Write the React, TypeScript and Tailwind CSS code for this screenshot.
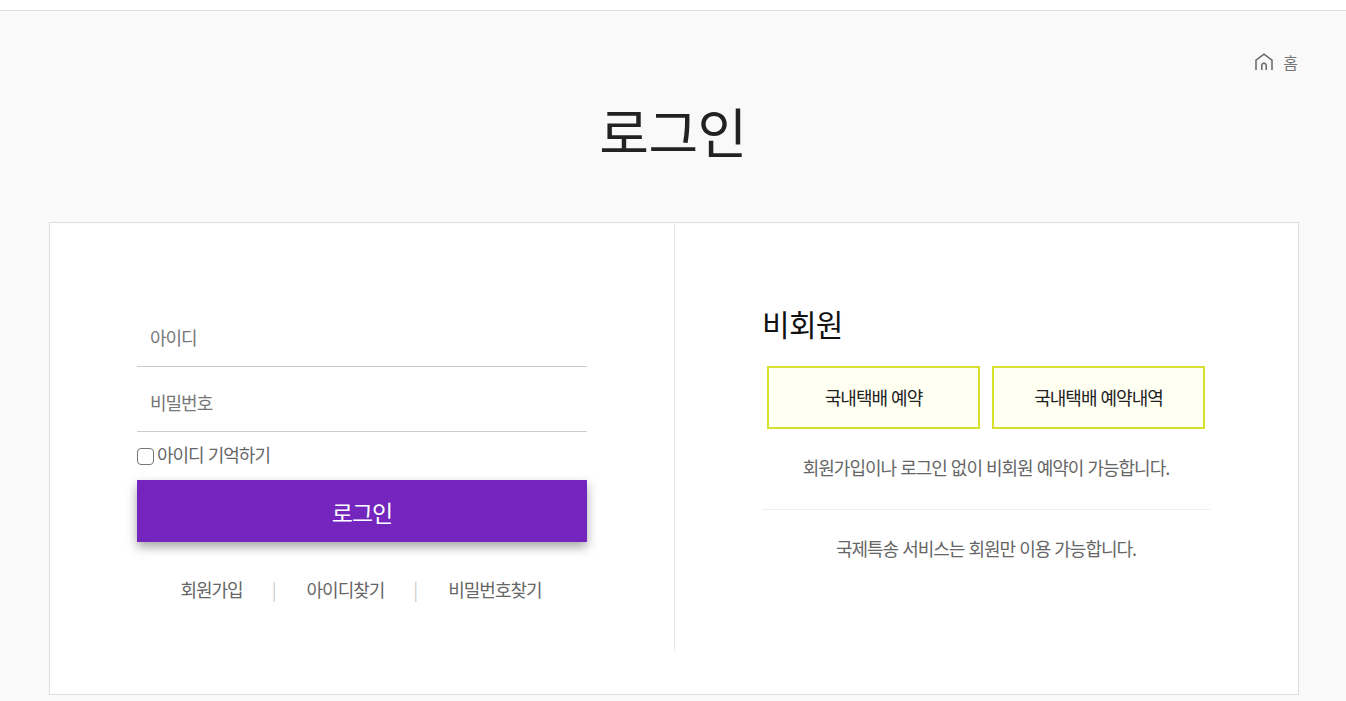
const font = { fontFamily: '"Noto Sans CJK KR", "Noto Sans", sans-serif' }

function Field({ label, className = '' }: { label: string; className?: string }) {
  return (
    <div className={`flex h-[64px] items-center border-b border-[#cccccc] pt-[5px] pl-[13px] text-[18px] tracking-[-1px] text-[#777777] ${className}`}>
      {label}
    </div>
  )
}

function GuestButton({ label }: { label: string }) {
  return (
    <a className="flex h-[63px] w-[213px] items-center justify-center border-2 border-[#d6e02f] bg-[#fffff2] text-[18px] tracking-[-1px] [word-spacing:1px] text-[#222222]">
      {label}
    </a>
  )
}

function HomeIcon() {
  return (
    <svg width="18" height="18" viewBox="0 0 18 18" fill="none" stroke="#666666" strokeWidth="1.5">
      <path d="M1 17V7.2L9 1.2L17 7.2V17" />
      <path d="M6.8 17V12.5a2.2 2.2 0 0 1 4.4 0V17" />
    </svg>
  )
}

export default function App() {
  return (
    <div className="h-[701px] overflow-hidden bg-[#f9f9f9]" style={font}>
      <div className="h-[11px] border-b border-[#e0e0e0] bg-white" />
      <div className="pr-[47px] pl-[49px]">
        <div className="flex h-[66px] items-center justify-end gap-[10px] pt-[36px] pr-[1px] text-[16px] text-[#777777]">
          <HomeIcon />
          <span>홈</span>
        </div>
        <h1 className="h-[145px] pt-[14px] pr-[2px] text-center text-[54px] leading-[80px] font-normal tracking-[-0.5px] text-[#222222]">
          로그인
        </h1>
        <div className="flex h-[473px] border border-[#dddddd] bg-white">
          {/* member login */}
          <div className="h-[428px] w-[625px] border-r border-[#e8e8e8] pt-[80px] pr-[87px] pl-[87px]">
            <Field label="아이디" />
            <Field label="비밀번호" className="mt-[1px]" />
            <label className="flex h-[48px] items-center text-[18px] tracking-[-1px] [word-spacing:1px] text-[#666666]">
              <span className="mt-[1px] h-[17px] w-[17px] rounded-[4px] border-[1.5px] border-[#767676] bg-white" />
              <span className="mb-[4px] ml-[3px]">아이디 기억하기</span>
            </label>
            <button className="block h-[62px] w-full bg-[#7325bd] pt-[2px] text-[23px] tracking-[-1px] text-white shadow-[0_5px_10px_rgba(0,0,0,0.35)]">
              로그인
            </button>
            <div className="mt-[29px] flex justify-center pr-[2px] text-[18px] leading-[36px] tracking-[-1px] text-[#666666]">
              <span>회원가입</span>
              <span className="mr-[31px] ml-[29px] text-[#cccccc]">|</span>
              <span>아이디찾기</span>
              <span className="mr-[31px] ml-[29px] text-[#cccccc]">|</span>
              <span>비밀번호찾기</span>
            </div>
          </div>
          {/* guest */}
          <div className="flex-1 pt-[78px] pr-[88px] pl-[87px]">
            <h2 className="text-[30px] leading-[44px] font-normal tracking-[-0.7px] text-[#111111]">비회원</h2>
            <div className="mt-[21px] flex justify-center gap-[12px]">
              <GuestButton label="국내택배 예약" />
              <GuestButton label="국내택배 예약내역" />
            </div>
            <p className="mt-[23px] border-b border-[#eeeeee] pb-[27px] text-center text-[18px] leading-[30px] tracking-[-1px] [word-spacing:1px] text-[#666666]">
              회원가입이나 로그인 없이 비회원 예약이 가능합니다.
            </p>
            <p className="mt-[23px] text-center text-[18px] leading-[30px] tracking-[-1px] [word-spacing:1px] text-[#666666]">
              국제특송 서비스는 회원만 이용 가능합니다.
            </p>
          </div>
        </div>
      </div>
    </div>
  )
}
